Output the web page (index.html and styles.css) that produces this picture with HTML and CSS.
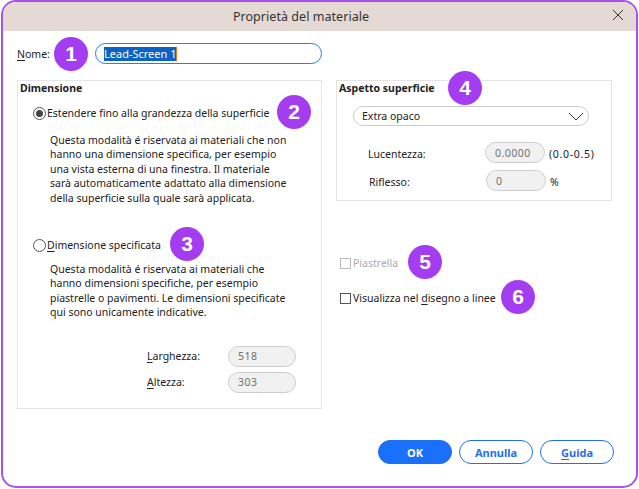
FILE: index.html
```html
<!DOCTYPE html>
<html lang="it">
<head>
<meta charset="utf-8">
<title>Proprietà del materiale</title>
<link rel="stylesheet" href="styles.css">
</head>
<body>
<div class="window">
  <header class="titlebar">
    <span class="title">Proprietà del materiale</span>
    <svg class="close" width="12" height="12" viewBox="0 0 12 12"><path d="M1 1L11 11M11 1L1 11" stroke="#333" stroke-width="1" fill="none"/></svg>
  </header>
  <div class="body">
    <div class="name-row">
      <label class="name-label"><u>N</u>ome:</label>
      <div class="name-input"><span class="selected">Lead-Screen 1</span><span class="caret"></span></div>
      <span class="badge b1">1</span>
    </div>
    <div class="columns">
      <section class="group left">
        <h2 class="group-title">Dimensione</h2>
        <div class="radio-row first"><span class="radio on"></span><span>Estendere fino alla grandezza della superficie</span><span class="badge b2">2</span></div>
        <p class="desc d1">Questa modalità é riservata ai materiali che non<br>hanno una dimensione specifica, per esempio<br>una vista esterna di una finestra. Il materiale<br>sarà automaticamente adattato alla dimensione<br>della superficie sulla quale sarà applicata.</p>
        <div class="radio-row second"><span class="radio"></span><span><u>D</u>imensione specificata</span><span class="badge b3">3</span></div>
        <p class="desc d2">Questa modalità é riservata ai materiali che<br>hanno dimensioni specifiche, per esempio<br>piastrelle o pavimenti. Le dimensioni specificate<br>qui sono unicamente indicative.</p>
        <div class="dims">
          <label><u>L</u>arghezza:</label><div class="field dim">518</div>
          <label><u>A</u>ltezza:</label><div class="field dim">303</div>
        </div>
      </section>
      <div class="right">
        <section class="group surface">
          <h2 class="group-title">Aspetto superficie</h2>
          <span class="badge b4">4</span>
          <div class="select"><span>Extra opaco</span><svg width="16" height="9" viewBox="0 0 16 9"><path d="M1 1L8 8L15 1" stroke="#333" stroke-width="1" fill="none"/></svg></div>
          <div class="surface-row lucent"><label>Lucentezza:</label><div class="field val">0.0000</div><span class="unit">(0.0-0.5)</span></div>
          <div class="surface-row reflect"><label>Riflesso:</label><div class="field val">0</div><span class="unit">%</span></div>
        </section>
        <div class="check-row disabled"><span class="check"></span><span>Piastrella</span><span class="badge b5">5</span></div>
        <div class="check-row lines"><span class="check"></span><span>Visualizza nel <u>d</u>isegno a linee</span><span class="badge b6">6</span></div>
      </div>
    </div>
    <footer class="buttons">
      <button class="btn primary">OK</button>
      <button class="btn">Annulla</button>
      <button class="btn"><u>G</u>uida</button>
    </footer>
  </div>
</div>
</body>
</html>
```
FILE: styles.css
```css
* { box-sizing: border-box; }
html, body { margin: 0; height: 100%; background: #fff; }
body {
  font-family: "Noto Sans", "Open Sans", sans-serif;
  font-size: 10.5px;
  color: #222;
  overflow: hidden;
}
u { text-underline-offset: 2px; }
.window {
  width: 637px;
  height: 488px;
  margin-left: 1px;
  border: 2px solid #a951ec;
  border-radius: 15px;
  overflow: hidden;
  display: flex;
  flex-direction: column;
  background: #fff;
}
.titlebar {
  height: 29px;
  flex: none;
  background: #e5dad3;
  position: relative;
  display: flex;
  align-items: center;
  justify-content: center;
}
.title { font-size: 12.5px; color: #333; padding-right: 37px; letter-spacing: .05px; }
.close { position: absolute; right: 12px; top: 7px; }
.body { flex: 1; padding: 12px 22px 22px 14px; display: flex; flex-direction: column; position: relative; }
.name-row { display: flex; align-items: center; height: 21px; position: relative; }
.name-label { width: 78px; }
.name-input {
  width: 227px;
  height: 21px;
  border: 1px solid #2b7bf0;
  border-radius: 11px;
  padding: 0 8px;
  display: flex;
  align-items: center;
  font-size: 11px;
}
.selected { background: #0a64c8; color: #fff; line-height: 14px; }
.caret { width: 1px; height: 14px; background: #e87a1c; }
.badge {
  position: absolute;
  width: 34px;
  height: 34px;
  border-radius: 50%;
  background: #a43df0;
  color: #fff;
  font-family: "Liberation Sans", Arimo, sans-serif;
  font-size: 21px;
  font-weight: 700;
  display: flex;
  align-items: center;
  justify-content: center;
}
.b1 { left: 37px; top: -6px; }
.b2 { left: 244px; top: -10px; }
.b3 { left: 137px; top: -10px; }
.b4 { left: 111px; top: -10px; }
.b5 { left: 68px; top: -10px; }
.b6 { left: 161px; top: -10px; }
.columns { display: flex; align-items: flex-start; gap: 14px; margin-top: 16px; flex: 1; }
.group { border: 1px solid #e4e4e4; position: relative; }
.group-title { margin: 0; font-size: 10.5px; font-weight: 700; color: #222; }
.left { width: 305px; height: 329px; padding: 0 2px; }
.radio-row { display: flex; align-items: center; height: 16px; position: relative; margin-left: 13px; gap: 1px; }
.radio-row.first { margin-top: 10px; }
.radio-row.second { margin-top: 32px; }
.radio {
  width: 13px;
  height: 13px;
  border: 1px solid #555;
  border-radius: 50%;
  flex: none;
  position: relative;
}
.radio.on::after {
  content: "";
  position: absolute;
  inset: 2px;
  border-radius: 50%;
  background: #444;
}
.desc { margin: 0 0 0 30px; line-height: 14.4px; font-size: 10.5px; }
.d1 { margin-top: 12px; }
.d2 { margin-top: 9px; }
.dims {
  display: grid;
  grid-template-columns: 81px 68px;
  row-gap: 5px;
  align-items: center;
  margin: 26px 0 0 127px;
}
.field {
  height: 21px;
  border: 1px solid #ccc;
  border-radius: 11px;
  background: #f1f1f1;
  color: #707070;
  display: flex;
  align-items: center;
  padding-left: 9px;
  letter-spacing: .5px;
}
.dim { width: 68px; }
.right { width: 276px; position: relative; }
.surface { height: 121px; padding: 0 2px; }
.select {
  margin: 11px 0 0 14px;
  width: 236px;
  height: 20px;
  border: 1px solid #ccc;
  border-radius: 10px;
  display: flex;
  align-items: center;
  justify-content: space-between;
  padding: 0 4px 0 8px;
}
.surface-row { display: flex; align-items: center; height: 21px; }
.surface-row label { flex: none; padding-top: 2px; }
.lucent { margin: 16px 0 0 29px; }
.lucent label { width: 117px; }
.reflect { margin: 7px 0 0 30px; }
.reflect label { width: 117px; }
.val { width: 60px; margin-right: 4px; }
.unit { letter-spacing: .7px; padding-top: 2px; }
.check-row { display: flex; align-items: center; height: 16px; gap: 2px; position: relative; }
.check { width: 11px; height: 11px; border: 1px solid #555; flex: none; }
.check-row.disabled { margin-top: 54px; margin-left: 4px; color: #aaa; }
.check-row.disabled .check { border-color: #bbb; }
.check-row.lines { margin-top: 19px; margin-left: 4px; }
.buttons { display: flex; justify-content: flex-end; gap: 7px; }
.btn {
  width: 74px;
  height: 24px;
  border: 1px solid #1f6ff0;
  border-radius: 12px;
  background: #fff;
  color: #1f6ff0;
  font: 700 11px "Noto Sans", sans-serif;
  padding: 0;
}
.btn.primary { background: #1a6ffb; color: #fff; }
```
